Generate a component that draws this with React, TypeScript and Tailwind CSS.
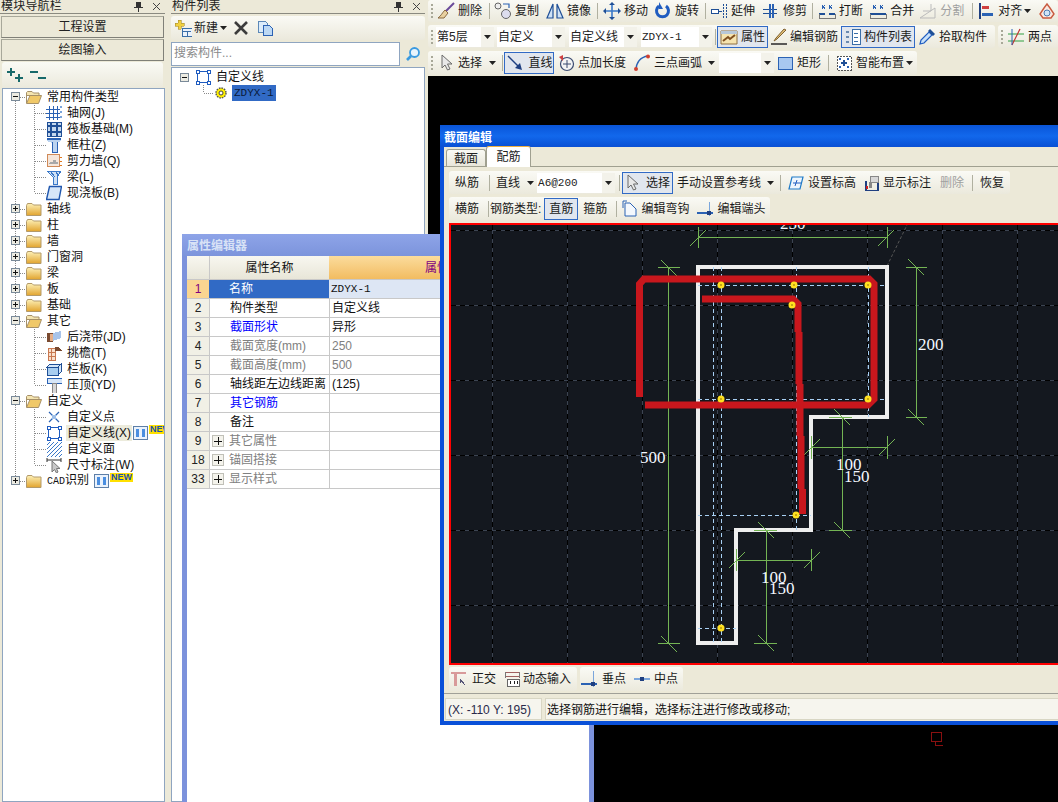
import type { ReactNode } from "react";

// small helpers for the icons
function Ico({ children, w = 16, h = 16, className = "" }: { children: ReactNode; w?: number; h?: number; className?: string }) {
  return (
    <svg width={w} height={h} viewBox={`0 0 ${w} ${h}`} className={`shrink-0 ${className}`} fill="none" shapeRendering="crispEdges">
      {children}
    </svg>
  );
}

const FolderClosed = () => (
  <svg width="16" height="14" viewBox="0 0 16 14" className="shrink-0">
    <defs>
      <linearGradient id="fc" x1="0" y1="0" x2="0" y2="1">
        <stop offset="0" stopColor="#fdf1b8" />
        <stop offset="1" stopColor="#e2a42e" />
      </linearGradient>
    </defs>
    <path d="M.5 3.5 L1.5 1.5 H6 L7.5 3 H15 V13.5 H.5Z" fill="url(#fc)" stroke="#b39a6a" />
  </svg>
);

const FolderOpen = () => (
  <svg width="16" height="14" viewBox="0 0 16 14" className="shrink-0">
    <path d="M.5 13 V2.5 L1.5 1.5 H6 L7.5 3 H13 V5.5 H.5" fill="#f4e4b0" stroke="#a69068" />
    <path d="M.5 13.5 L4 5.5 H15.5 L12.5 13.5Z" fill="#f0c868" stroke="#a69068" />
  </svg>
);

const Icons: Record<string, ReactNode> = {
  axis: (
    <Ico>
      <path d="M3 1V15M7 1V15M11 1V15M0 4H14M0 8H14M0 12H14" stroke="#2b62b4" />
      <path d="M14 1h2v2h-2zM14 6h2v2h-2zM14 11h2v2h-2z" fill="#7ba6dc" />
    </Ico>
  ),
  raft: (
    <Ico>
      <rect x="1" y="1" width="14" height="14" fill="#c5d8ee" stroke="#1f4f96" />
      <path d="M5 1V15M11 1V15M1 5H15M1 11H15" stroke="#1f4f96" strokeWidth="2" />
    </Ico>
  ),
  column: (
    <Ico>
      <path d="M1 1H15V4L11 6V15H6V6L1 4Z" fill="#bcd4f0" />
      <path d="M1 1H15V3H1Z" fill="#2b62b4" />
      <path d="M6 5V15H11V5" stroke="#2b62b4" />
    </Ico>
  ),
  wall: (
    <Ico>
      <rect x="1" y="1.5" width="12" height="12" fill="#f5e6da" stroke="#d08a58" />
      <path d="M3 11h9v-2h-2V7H7v2H4z" fill="#a8a8a8" />
      <path d="M14 4h2M14 8h2M14 12h2" stroke="#e07a20" />
    </Ico>
  ),
  beam: (
    <Ico>
      <path d="M1 2H15L11 8V15H7V8Z" fill="#cfe2f6" stroke="#3a78c8" />
      <path d="M4 2L9 8M9 2L13 7" stroke="#3a78c8" />
    </Ico>
  ),
  slab: (
    <svg width="16" height="16" viewBox="0 0 16 16" className="shrink-0">
      <path d="M3.5 1.5H15.5L13 14.5H.5Z" fill="#d6e6f8" stroke="#2057ae" strokeWidth="1.4" />
    </svg>
  ),
  post: (
    <Ico>
      <rect x="1" y="4" width="6" height="9" fill="#7a4a30" />
      <path d="M4 5h3v7H4z" fill="#e8b088" />
      <path d="M7 4L15 2V9L7 12Z" fill="#a8c4ea" />
    </Ico>
  ),
  eave: (
    <Ico>
      <rect x="2" y="3" width="7" height="12" fill="#fae0cc" stroke="#c87850" />
      <path d="M2 7H9M2 11H9M5 3V15" stroke="#c87850" />
      <path d="M9 2H13L16 6H9Z" fill="#7a4a30" />
    </Ico>
  ),
  rail: (
    <Ico>
      <path d="M1 6H12V14H1Z" fill="#a8cdf0" stroke="#1f4f96" />
      <path d="M1 6L4 3H15L12 6ZM12 6V14L15 11V3Z" fill="#d6e6f8" stroke="#1f4f96" />
    </Ico>
  ),
  cap: (
    <Ico>
      <rect x="1" y="1" width="15" height="5" fill="#d6e6f8" stroke="#2b62b4" />
      <path d="M6 6H10V16H6Z" fill="#d8d8d8" stroke="#888" />
    </Ico>
  ),
  xpoint: (
    <svg width="16" height="16" viewBox="0 0 16 16" className="shrink-0">
      <path d="M3 3L13 13M13 3L3 13" stroke="#2b62b4" strokeWidth="1.2" />
      <path d="M6 6L10 10M10 6L6 10" stroke="#9cc0ec" strokeWidth="1.2" />
    </svg>
  ),
  cline: (
    <Ico>
      <rect x="2.5" y="2.5" width="11" height="11" stroke="#1f5cc0" />
      <path d="M1 1h3v3H1zM12 1h3v3h-3zM1 12h3v3H1zM12 12h3v3h-3z" fill="#fff" stroke="#1f5cc0" />
    </Ico>
  ),
  cface: (
    <svg width="16" height="16" viewBox="0 0 16 16" className="shrink-0">
      <path d="M1 4L4 1M1 8L8 1M1 12L12 1M1 16L16 1M5 16L16 5M9 16L16 9M13 16L16 13" stroke="#3a78c8" />
    </svg>
  ),
  dim: (
    <svg width="16" height="16" viewBox="0 0 16 16" className="shrink-0">
      <path d="M1 1V5M15 1V5M1 3H15" stroke="#333" />
      <path d="M6 4V15L8.5 12.5L10.5 16L12 15L10.5 11.5H14Z" fill="#c8c8c8" stroke="#777" />
    </svg>
  ),
  badge: (
    <Ico w={15} h={14}>
      <rect x=".5" y=".5" width="14" height="13" fill="#eaf2fc" stroke="#5d7fa8" />
      <path d="M3 3h3v8H3zM9 3h3v8H9z" fill="#4a8ee0" />
    </Ico>
  ),
  plusplus: (
    <Ico w={17} h={15}>
      <path d="M3 0h2v3h3v2H5v3H3V5H0V3h3zM11 6h2v3h3v2h-3v3h-2v-3H8V9h3z" fill="#17696a" />
    </Ico>
  ),
  minusminus: (
    <Ico w={17} h={15}>
      <path d="M0 3h8v2H0zM8 9h8v2H8z" fill="#17696a" />
    </Ico>
  ),
  newItem: (
    <Ico w={17} h={18}>
      <path d="M3 1h3v3h3v3H6v3H3V7H0V4h3z" fill="#f0d040" stroke="#a89030" strokeWidth=".6" />
      <rect x="7" y="9" width="10" height="8" fill="#eaf2fc" stroke="#3a6ea8" />
      <path d="M8 12H16M12 12V17" stroke="#3a6ea8" />
    </Ico>
  ),
  del: (
    <svg width="16" height="16" viewBox="0 0 16 16" className="shrink-0">
      <path d="M2 2L14 14M14 2L2 14" stroke="#3c3c3c" strokeWidth="2.6" />
    </svg>
  ),
  copy: (
    <Ico>
      <path d="M1 1H8L10 3V12H1Z" fill="#dcecfa" stroke="#5c88b8" />
      <path d="M6 5H12L15 8V15H6Z" fill="#bcd8f4" stroke="#2b62b4" />
    </Ico>
  ),
  search: (
    <svg width="16" height="16" viewBox="0 0 16 16" className="shrink-0">
      <circle cx="9.5" cy="6.5" r="4.5" fill="#e8f4fc" stroke="#3a9ae0" strokeWidth="1.8" />
      <path d="M6 10L2 14" stroke="#3a9ae0" strokeWidth="2.6" />
    </svg>
  ),
  gear: (
    <svg width="12" height="12" viewBox="0 0 12 12" className="shrink-0">
      <circle cx="6" cy="6" r="5" fill="#fff000" stroke="#555" strokeDasharray="1.6 1" strokeWidth="1.4" />
      <circle cx="6" cy="6" r="2" fill="#fff" stroke="#444" />
    </svg>
  ),
  erase: (
    <svg width="18" height="18" viewBox="0 0 18 18" className="shrink-0">
      <path d="M17 1L9 9" stroke="#6a4a9a" strokeWidth="2" />
      <path d="M8 8L11 11L7 16H1C4 14 5 11 8 8Z" fill="#e8d0a0" stroke="#8a6a40" />
    </svg>
  ),
  dup: (
    <svg width="18" height="18" viewBox="0 0 18 18" className="shrink-0" fill="none">
      <circle cx="4" cy="4" r="3" stroke="#666" fill="#eee" />
      <circle cx="12" cy="12" r="4.5" stroke="#666" fill="#dde" />
      <path d="M9 2H15V6" stroke="#2b62b4" strokeWidth="1.2" />
    </svg>
  ),
  mirror: (
    <svg width="18" height="18" viewBox="0 0 18 18" className="shrink-0">
      <path d="M7 2L1 16H7ZM11 2L17 16H11Z" fill="#cfe2f6" stroke="#1f4f96" strokeWidth="1.2" />
    </svg>
  ),
  move: (
    <svg width="18" height="18" viewBox="0 0 18 18" className="shrink-0">
      <path d="M9 2V16M2 9H16" stroke="#3a78c8" strokeWidth="1.6" />
      <path d="M9 0L12 3H6ZM9 18L6 15H12ZM0 9L3 6V12ZM18 9L15 12V6Z" fill="#1f4f96" />
    </svg>
  ),
  rotate: (
    <svg width="18" height="18" viewBox="0 0 18 18" className="shrink-0">
      <path d="M12 4A6 6 0 1 1 5 4" stroke="#1f5cc0" strokeWidth="3" fill="none" />
      <path d="M5 0V7H9Z" fill="#1f5cc0" />
    </svg>
  ),
  extend: (
    <Ico w={18} h={18}>
      <path d="M1 7H8V11H1Z" fill="#fff" stroke="#1f4f96" />
      <path d="M8 9H12" stroke="#1f4f96" />
      <path d="M13 2V16M16 2V16" stroke="#1f4f96" strokeDasharray="2 1" />
    </Ico>
  ),
  trim: (
    <Ico w={18} h={18}>
      <path d="M1 7H15M1 11H15" stroke="#1f4f96" />
      <path d="M8 2V16M11 2V16" stroke="#2b62b4" strokeWidth="1.4" />
    </Ico>
  ),
  brk: (
    <Ico w={18} h={18}>
      <path d="M1 12H7M11 12H17" stroke="#1f4f96" strokeWidth="2" />
      <path d="M1 12V16H17V12" stroke="#777" />
      <path d="M4 3L7 7M4 7L7 3M11 3L14 7M11 7L14 3" stroke="#2b62b4" />
    </Ico>
  ),
  merge: (
    <Ico w={18} h={18}>
      <path d="M1 12H17" stroke="#1f4f96" strokeWidth="2" />
      <path d="M1 12V16H17V12" stroke="#777" />
      <path d="M4 3L7 7M4 7L7 3M11 3L14 7M11 7L14 3" stroke="#2b62b4" />
    </Ico>
  ),
  split: (
    <svg width="18" height="18" viewBox="0 0 18 18" className="shrink-0">
      <path d="M1 16L16 6V16ZM4 9H12V2" stroke="#bbb" fill="none" />
    </svg>
  ),
  align: (
    <Ico w={18} h={18}>
      <path d="M3 1V17" stroke="#1f3f80" strokeWidth="2" />
      <path d="M5 4H12V7H5Z" fill="#d04040" />
      <path d="M5 11H16V14H5Z" fill="#2b62b4" />
    </Ico>
  ),
  cloud: (
    <svg width="18" height="18" viewBox="0 0 18 18" className="shrink-0">
      <path d="M9 2L12 6L16 12L13 16H5L2 12L6 6Z" fill="#fbe8e0" stroke="#c85a40" strokeWidth="1.4" />
      <circle cx="9" cy="11" r="3" fill="#d0e4f8" stroke="#4a7ab0" />
    </svg>
  ),
  prop: (
    <svg width="18" height="18" viewBox="0 0 18 18" className="shrink-0" fill="none">
      <path d="M1 3H17V16H1Z" fill="#f6e4b0" stroke="#907040" />
      <path d="M1 3H17V6H1Z" fill="#b8c8d8" />
      <path d="M3 13L8 9L10 11L15 7" stroke="#805020" strokeWidth="2" />
    </svg>
  ),
  pencil: (
    <svg width="18" height="18" viewBox="0 0 18 18" className="shrink-0">
      <path d="M16 2L7 11L4 13L6 10L14 1Z" fill="#e0c078" stroke="#806030" />
      <path d="M1 16H17" stroke="#333" strokeWidth="1.6" />
    </svg>
  ),
  list: (
    <Ico w={18} h={18}>
      <path d="M2 3h3v2H2zM2 8h3v2H2zM2 13h3v2H2z" fill="#6a8ab0" />
      <rect x="8" y="1.5" width="8" height="15" fill="#fff" stroke="#3a6ea8" />
      <path d="M10 5H14M10 9H14M10 13H14" stroke="#3a6ea8" />
    </Ico>
  ),
  pick: (
    <svg width="18" height="18" viewBox="0 0 18 18" className="shrink-0">
      <path d="M2 16L3 12L11 4L14 7L6 15Z" fill="#c8e0f8" stroke="#1f5cc0" strokeWidth="1.2" />
      <path d="M10 3L12 1L17 6L15 8Z" fill="#1f4f96" />
    </svg>
  ),
  twoPoints: (
    <svg width="18" height="18" viewBox="0 0 18 18" className="shrink-0">
      <path d="M1 6H17M1 13H17" stroke="#30a040" />
      <path d="M13 1L5 17" stroke="#c03030" strokeWidth="1.2" />
      <path d="M5 1V17" stroke="#2b62b4" />
    </svg>
  ),
  cursor: (
    <svg width="16" height="18" viewBox="0 0 16 18" className="shrink-0">
      <path d="M3 1V14L6 11L8.5 16L11 15L8.5 10H13Z" fill="#e8e8e8" stroke="#6a6a6a" />
    </svg>
  ),
  lineTool: (
    <svg width="18" height="18" viewBox="0 0 18 18" className="shrink-0">
      <path d="M2 2L14 14" stroke="#1f3f80" strokeWidth="1.4" />
      <path d="M16 16L9 14L14 9Z" fill="#1f3f80" />
    </svg>
  ),
  ptLen: (
    <svg width="18" height="18" viewBox="0 0 18 18" className="shrink-0">
      <circle cx="9" cy="10" r="6.5" stroke="#3a4a70" strokeWidth="1.2" fill="#f4f4f4" />
      <path d="M9 6V14M5 10H13" stroke="#3a4a70" />
      <path d="M1 3L5 1L5 7Z" fill="#d04040" />
    </svg>
  ),
  arc3: (
    <svg width="18" height="18" viewBox="0 0 18 18" className="shrink-0" fill="none">
      <path d="M3 16C3 9 7 3 15 2" stroke="#2b62b4" strokeWidth="1.3" />
      <circle cx="3" cy="15" r="2" fill="#d04030" />
      <circle cx="15" cy="2.5" r="2" fill="#d04030" />
    </svg>
  ),
  rect: (
    <svg width="15" height="13" viewBox="0 0 15 13" className="shrink-0">
      <rect x=".5" y=".5" width="14" height="12" fill="#a8c8f0" stroke="#2b62b4" />
    </svg>
  ),
  smart: (
    <Ico w={16} h={16}>
      <rect x="1" y="1" width="14" height="14" fill="#fff" stroke="#555" strokeDasharray="2 1" />
      <path d="M5 8H11M8 5V11" stroke="#1f4f96" strokeWidth="2" />
      <path d="M3 3h2v2H3zM11 3h2v2h-2zM3 11h2v2H3zM11 11h2v2h-2z" fill="#2b62b4" />
    </Ico>
  ),
  level: (
    <svg width="16" height="16" viewBox="0 0 16 16" className="shrink-0">
      <path d="M4 2H15L12 14H1Z" fill="#eef6fd" stroke="#1f7ac8" strokeWidth="1.2" />
      <path d="M5 8H13M9 5L7 11" stroke="#1f5cc0" />
    </svg>
  ),
  showDim: (
    <Ico>
      <path d="M1 6H3V16H1ZM13 6H15V16H13Z" fill="#1f3f80" />
      <path d="M1 15H15" stroke="#1f3f80" />
      <rect x="6" y="1" width="8" height="6" fill="#d8d8d8" stroke="#888" />
      <path d="M6 7V13" stroke="#888" strokeWidth="3" />
      <rect x="2" y="11" width="2" height="3" fill="#d02020" />
    </Ico>
  ),
  hook: (
    <svg width="15" height="17" viewBox="0 0 15 17" className="shrink-0" fill="none">
      <path d="M3 3H8L14 9V16H3Z" fill="#f4f8fd" stroke="#2b62b4" />
      <path d="M1 8V1H5" stroke="#2b62b4" />
    </svg>
  ),
  end: (
    <Ico w={17} h={16}>
      <path d="M0 12H16" stroke="#2b62b4" strokeWidth="2" />
      <path d="M12 1V15" stroke="#7ba6dc" />
      <rect x="10" y="10" width="4" height="4" fill="#1f3f80" />
    </Ico>
  ),
  ortho: (
    <Ico w={16} h={16}>
      <path d="M0 1H15V3H0Z" fill="#d89a9a" />
      <path d="M3 1H6V15H3Z" fill="#d89a9a" />
      <path d="M9 8L14 14M9 8V12" stroke="#557" />
    </Ico>
  ),
  dyn: (
    <Ico w={16} h={16}>
      <path d="M1 1H15M1 5H15" stroke="#a06060" />
      <path d="M1 1V7M15 1V7" stroke="#777" />
      <rect x="3" y="8" width="12" height="7" fill="#fff" stroke="#666" />
      <path d="M6 10V13M10 10V13M13 10V13" stroke="#222" />
    </Ico>
  ),
  perp: (
    <Ico w={16} h={16}>
      <path d="M0 13H16" stroke="#2b62b4" strokeWidth="2" />
      <path d="M12 0V16" stroke="#7ba6dc" />
      <rect x="10" y="11" width="4" height="4" fill="#1f3f80" />
    </Ico>
  ),
  mid: (
    <Ico w={16} h={16}>
      <path d="M0 8H16" stroke="#7ba6dc" strokeWidth="2" />
      <rect x="6" y="6" width="4" height="4" fill="#1f3f80" />
    </Ico>
  ),
  pin: (
    <Ico w={9} h={10}>
      <path d="M2 0H7V5H9V6H5V10H4V6H0V5H2Z" fill="#333" />
    </Ico>
  ),
  close: (
    <svg width="9" height="9" viewBox="0 0 9 9" className="shrink-0">
      <path d="M1 1L8 8M8 1L1 8" stroke="#444" />
    </svg>
  ),
};

function PanelTitle({ title }: { title: string }) {
  return (
    <div className="flex h-[14px] items-center border-b border-[#8a8a80] pl-px leading-[13px]">
      <span className="text-[#222] tracking-[0.2px]">{title}</span>
      <span className="ml-auto flex items-center gap-[9px] pr-[4px]">
        {Icons.pin}
        {Icons.close}
      </span>
    </div>
  );
}

function NavButton({ label }: { label: string }) {
  return (
    <div className="mx-px mt-px flex h-[22px] items-center justify-center border border-[#a8a89a] border-r-[#808078] border-b-[#808078] bg-[#ece9d8] text-[#222]">
      {label}
    </div>
  );
}

function Expander({ open }: { open: boolean }) {
  return (
    <span className="flex h-[9px] w-[9px] shrink-0 items-center justify-center border border-[#7a8a99] bg-[#ecebe2]">
      <svg width="7" height="7" viewBox="0 0 7 7" shapeRendering="crispEdges">
        <path d={open ? "M1 3.5H6" : "M1 3.5H6M3.5 1V6"} stroke="#111" />
      </svg>
    </span>
  );
}

function Guide({ type }: { type: "root" | "rootFirst" | "rootLast" | "child" | "childLast" }) {
  const top = type === "rootFirst" ? "M12.5 8V16" : type === "rootLast" ? "M12.5 0V8" : "M12.5 0V16";
  const kid = type === "child" ? "M31.5 0V16M31.5 8.5H43" : type === "childLast" ? "M31.5 0V8M31.5 8.5H43" : "";
  const w = type === "child" || type === "childLast" ? 43 : 23;
  const rootH = type === "root" || type === "rootFirst" || type === "rootLast" ? "M12.5 8.5H23" : "";
  return (
    <svg width={w} height="16" viewBox={`0 0 ${w} 16`} className="shrink-0" fill="none" shapeRendering="crispEdges">
      <path d={`${top}${rootH}${kid}`} stroke="#8a8a8a" strokeDasharray="1 1" />
    </svg>
  );
}

function NewBadge() {
  return <span className="ml-px h-[9px] -translate-y-[4px] bg-[#ffe000] px-px text-[9px] font-bold leading-[9px] text-[#1a50b0]">NEW</span>;
}

function RootRow({ open, label, first, last, extra }: { open?: boolean; label: ReactNode; first?: boolean; last?: boolean; extra?: ReactNode }) {
  return (
    <div className="relative flex h-4 items-center whitespace-nowrap">
      <Guide type={first ? "rootFirst" : last ? "rootLast" : "root"} />
      {/* expander sits on the guide line */}
      <span className="absolute left-[8px] top-[3px]">
        <Expander open={!!open} />
      </span>
      {open ? <FolderOpen /> : <FolderClosed />}
      <span className="ml-[5px] text-[#111]">{label}</span>
      {extra}
    </div>
  );
}

function ChildRow({ icon, label, last, selected, extra }: { icon: string; label: string; last?: boolean; selected?: boolean; extra?: ReactNode }) {
  return (
    <div className="flex h-4 items-center whitespace-nowrap">
      <Guide type={last ? "childLast" : "child"} />
      {Icons[icon]}
      <span className={`ml-[4px] pl-[1px] pr-px text-[#111] ${selected ? "bg-[#ecebdc]" : ""}`}>{label}</span>
      {extra}
    </div>
  );
}

function Arrow({ className = "" }: { className?: string }) {
  return (
    <svg width="7" height="4" viewBox="0 0 7 4" className={`shrink-0 ${className}`}>
      <path d="M0 0H7L3.5 4Z" fill="#222" />
    </svg>
  );
}

function Grip() {
  return (
    <svg width="3" height="16" viewBox="0 0 3 16" className="shrink-0" shapeRendering="crispEdges">
      <path d="M1 1V15" stroke="#a8a898" strokeDasharray="2 2" strokeWidth="2" />
    </svg>
  );
}

function Sep({ className = "" }: { className?: string }) {
  return <span className={`h-[16px] w-px shrink-0 bg-[#b0b0a0] ${className}`} />;
}

function Tool({ icon, label, className = "", gray, box, gap = "gap-[3px]" }: { icon?: string; label: string; className?: string; gray?: boolean; box?: boolean; gap?: string }) {
  return (
    <span
      className={`flex shrink-0 items-center whitespace-nowrap ${gap} ${gray ? "text-[#a0a0a0]" : "text-[#1a1a1a]"} ${
        box ? "h-[22px] justify-center border border-[#316ac5] bg-[#e1e6ee]" : ""
      } ${className}`}
    >
      {icon ? Icons[icon] : null}
      {label}
    </span>
  );
}

function Combo({ text, className = "", mono }: { text: string; className?: string; mono?: boolean }) {
  return (
    <span className={`flex h-[20px] shrink-0 items-center bg-white pl-[1px] ${className}`}>
      <span className={mono ? "font-['Liberation_Mono',monospace] text-[11px] text-[#222]" : "text-[#222]"}>{text}</span>
      <span className="ml-auto flex h-full w-[13px] items-center justify-center bg-[#f3f2ea]">
        <Arrow />
      </span>
    </span>
  );
}

function Bar({ children, className = "" }: { children: ReactNode; className?: string }) {
  return <div className={`flex items-center rounded-[3px] bg-linear-to-b from-[#fafaf5] to-[#ebe9dc] ${className}`}>{children}</div>;
}

type PropRow = { n: string; name: string; value?: string; tone?: "blue" | "gray"; plus?: boolean };

const propRows: PropRow[] = [
  { n: "2", name: "构件类型", value: "自定义线" },
  { n: "3", name: "截面形状", value: "异形", tone: "blue" },
  { n: "4", name: "截面宽度(mm)", value: "250", tone: "gray" },
  { n: "5", name: "截面高度(mm)", value: "500", tone: "gray" },
  { n: "6", name: "轴线距左边线距离", value: "(125)" },
  { n: "7", name: "其它钢筋", tone: "blue" },
  { n: "8", name: "备注" },
  { n: "9", name: "其它属性", tone: "gray", plus: true },
  { n: "18", name: "锚固搭接", tone: "gray", plus: true },
  { n: "33", name: "显示样式", tone: "gray", plus: true },
];

function PropertyWindow() {
  return (
    <div className="absolute left-[182px] top-[234px] flex h-[600px] w-[412px] flex-col border-x-[5px] border-[#7c92dc] bg-white">
      <div className="-mx-[5px] flex h-[22px] shrink-0 items-center bg-linear-to-b from-[#8ea4e8] to-[#7c94dc] pl-[5px] pt-[2px] font-bold text-[#d8e2f6]">属性编辑器</div>
      <div className="grid h-[24px] shrink-0 grid-cols-[22px_120px_1fr] border-b border-[#c8c8c8]">
        <span className="bg-linear-to-b from-[#f8f7f0] to-[#e8e6d8]" />
        <span className="flex items-center justify-center border-l border-[#c8c8c8] bg-linear-to-b from-[#f8f7f0] to-[#e8e6d8] text-[#111]">属性名称</span>
        <span className="flex items-center bg-linear-to-b from-[#fbdc9c] to-[#f2bc60] pl-[96px] text-[#800080]">属性值</span>
      </div>
      <div className="grid h-[19px] shrink-0 grid-cols-[22px_120px_1fr] border-b border-[#c8c8c8]">
        <span className="flex items-center justify-center bg-[#fad591] text-[#800080]">1</span>
        <span className="flex items-center bg-[#316ac5] pl-[20px] text-white">名称</span>
        <span className="flex items-center bg-[#dde6f4] pl-[2px] font-['Liberation_Mono',monospace] text-[11px] text-[#111]">ZDYX-1</span>
      </div>
      {propRows.map((r) => {
        const color = r.tone === "blue" ? "text-[#0000ff]" : r.tone === "gray" ? "text-[#808080]" : "text-[#111]";
        return (
          <div key={r.n} className="grid h-[19px] shrink-0 grid-cols-[22px_120px_1fr] border-b border-[#c8c8c8]">
            <span className="flex items-center justify-center bg-[#f1f0e6] text-[#222]">{r.n}</span>
            <span className={`flex items-center whitespace-nowrap border-l border-[#c8c8c8] ${r.plus ? "pl-[2px]" : "pl-[20px]"} ${color}`}>
              {r.plus ? (
                <span className="mr-[5px] flex h-[12px] w-[12px] items-center justify-center border border-[#c0c0b8] bg-[#f4f3ec] text-[#222]">
                  <svg width="8" height="8" viewBox="0 0 8 8" shapeRendering="crispEdges">
                    <path d="M0 4H8M4 0V8" stroke="#111" />
                  </svg>
                </span>
              ) : null}
              {r.name}
            </span>
            <span className={`flex items-center border-l border-[#c8c8c8] pl-[2px] ${r.tone === "gray" ? "text-[#808080]" : "text-[#111]"}`}>{r.value}</span>
          </div>
        );
      })}
    </div>
  );
}

// dimension strokes of the section drawing, in page coordinates
const greens = [
  "M698 238H887M698 228V249M887 228V249M690 247L706 231M878 247L894 231",
  "M668 268V644M658 268H680M658 644H680M661 261L677 277M661 637L677 653",
  "M916 268V418M906 268H927M906 418H927M908 260L924 276M908 410L924 426",
  "M811 448H887M811 437V460M887 437V460M804 456L820 440M879 456L895 440",
  "M842 418V531M829 418H852M829 531H852M834 410L850 426M834 523L850 539",
  "M736 561H811M736 550V572M811 550V572M729 569L745 553M804 569L820 553",
  "M766 531V644M754 531H777M754 644H777M758 523L774 539M758 636L774 652",
];

const dots = [
  [721, 286],
  [794, 286],
  [868, 286],
  [792, 306],
  [721, 400],
  [868, 400],
  [796, 516],
  [721, 629],
];

const labels: [string, number, number][] = [
  ["250", 780, 230],
  ["500", 640, 464],
  ["200", 918, 351],
  ["100", 836, 471],
  ["150", 844, 483],
  ["100", 761, 584],
  ["150", 769, 595],
];

function SectionDrawing() {
  const vs = [492, 567, 642, 717, 792, 867, 942, 1017];
  const hs = [231, 306, 381, 456, 531, 606];
  return (
    <svg width="640" height="438" viewBox="451 226 640 438" className="block">
      <g shapeRendering="crispEdges">
        {vs.map((x) => (
          <g key={x}>
            <path d={`M${x}.5 226V664`} stroke="#3c4452" />
            <path d={`M${x}.5 226V664`} stroke="#000" strokeDasharray="5 4" />
          </g>
        ))}
        {hs.map((y) => (
          <g key={y}>
            <path d={`M451 ${y}.5H1091`} stroke="#3c4452" />
            <path d={`M451 ${y}.5H1091`} stroke="#000" strokeDasharray="5 4" />
          </g>
        ))}
      </g>
      <path d="M887 267L907 226" stroke="#555" strokeDasharray="3 2" />
      <path d="M698 268H887V418H811V531H736V644H698Z" fill="none" stroke="#eeeeee" strokeWidth="4" />
      <g shapeRendering="crispEdges">
        <path d="M698 286.5H887M698 400.5H887M698 516.5H811M698 629.5H736M713.5 268V644M721.5 268V644M796.5 268V531M868.5 268V418" stroke="#a8d0f4" strokeDasharray="4 3" />
      </g>
      <path d={greens.join("")} stroke="#74b454" fill="none" shapeRendering="crispEdges" />
      <path d="M639.5 398V285L644 280H869L874 285V400L868 406H645" fill="none" stroke="#c8171d" strokeWidth="7" />
      <path d="M702 300H793L798 305V333" fill="none" stroke="#c8171d" strokeWidth="7" />
      <path d="M799 333V385M800 385V437M801 437V490M802.5 490V515" fill="none" stroke="#c8171d" strokeWidth="7" />
      {dots.map(([x, y]) => (
        <g key={`${x}-${y}`}>
          <circle cx={x} cy={y} r="3.5" fill="#ffe020" />
          <circle cx={x} cy={y} r=".8" fill="#806000" />
        </g>
      ))}
      {labels.map(([t, x, y]) => (
        <text key={`${t}${x}`} x={x} y={y} fill="#f4f8ff" fontSize="17" fontFamily="'Liberation Serif', serif">
          {t}
        </text>
      ))}
    </svg>
  );
}

function SectionWindow() {
  return (
    <div className="absolute left-[440px] top-[125px] flex h-[600px] w-[640px] flex-col border-x-4 border-b-4 border-[#0a50d8] bg-[#ece9d8]">
      <div className="-mx-1 flex h-[22px] shrink-0 items-center bg-linear-to-b from-[#0a55d8] via-[#1268ec] to-[#0a50d4] pl-[4px] pt-[3px] font-bold text-white">截面编辑</div>
      <div className="flex h-[20px] shrink-0 items-end border-b border-[#a0a090] pl-[2px]">
        <span className="flex h-[17px] w-[40px] items-center justify-center rounded-t-[3px] border border-b-0 border-[#a0a090] bg-linear-to-b from-[#fafaf5] to-[#e8e6da] pt-px text-[#222]">截面</span>
        <span className="-mb-px flex h-[21px] w-[45px] items-center justify-center rounded-t-[3px] border border-b-0 border-[#a0a090] border-t-[#f0b040] bg-white text-[#222]">配筋</span>
      </div>
      <Bar className="ml-[5px] mt-[4px] h-[23px] w-[561px]">
        <Tool label="纵筋" className="ml-[6px]" />
        <Sep className="ml-[10px]" />
        <Tool label="直线" className="ml-[6px]" />
        <Arrow className="ml-[7px]" />
        <Combo text="A6@200" mono className="ml-[3px] w-[78px]" />
        <Sep className="ml-[4px]" />
        <Tool icon="cursor" label="选择" box gap="gap-[5px]" className="ml-[2px] w-[51px]" />
        <Tool label="手动设置参考线" className="ml-[4px]" />
        <Arrow className="ml-[6px]" />
        <Sep className="ml-[6px]" />
        <Tool icon="level" label="设置标高" gap="gap-[4px]" className="ml-[7px]" />
        <Tool icon="showDim" label="显示标注" gap="gap-[3px]" className="ml-[8px]" />
        <Tool label="删除" gray className="ml-[9px]" />
        <Sep className="ml-[8px]" />
        <Tool label="恢复" className="ml-[7px]" />
      </Bar>
      <Bar className="ml-[5px] mt-[3px] h-[23px] w-[321px]">
        <Tool label="横筋" className="ml-[6px]" />
        <Sep className="ml-[9px]" />
        <Tool label="钢筋类型:" className="ml-[1px]" />
        <Tool label="直筋" box className="ml-[3px] w-[34px]" />
        <Tool label="箍筋" className="ml-[5px]" />
        <Sep className="ml-[9px]" />
        <Tool icon="hook" label="编辑弯钩" gap="gap-[4px]" className="ml-[5px]" />
        <Tool icon="end" label="编辑端头" gap="gap-[3px]" className="ml-[8px]" />
      </Bar>
      <div className="ml-[5px] mt-[3px] h-[442px] shrink-0 overflow-hidden border-2 border-[#ff0000] bg-[#14181f]">
        <SectionDrawing />
      </div>
      <div className="ml-[5px] flex h-[27px] shrink-0 items-center gap-[3px] pt-px">
        <Bar className="h-[24px] w-[128px] pl-[2px]">
          <Tool icon="ortho" label="正交" gap="gap-[5px]" />
          <Tool icon="dyn" label="动态输入" gap="gap-[3px]" className="ml-[8px]" />
        </Bar>
        <Bar className="h-[24px] w-[103px] pl-[1px]">
          <Tool icon="perp" label="垂点" gap="gap-[5px]" />
          <Tool icon="mid" label="中点" gap="gap-[4px]" className="ml-[8px]" />
        </Bar>
      </div>
      <div className="mt-px h-px shrink-0 bg-[#a0a098]" />
      <div className="mt-[4px] flex h-[22px] shrink-0 gap-[3px]">
        <span className="ml-px flex w-[97px] items-center border border-[#d8d6c4] bg-[#f6f5ee] pl-[2px] pt-px text-[#2a2a4a]">(X: -110 Y: 195)</span>
        <span className="flex flex-1 items-center border border-[#d8d6c4] bg-[#f6f5ee] pl-px pt-px text-[#111]">选择钢筋进行编辑，选择标注进行修改或移动;</span>
      </div>
    </div>
  );
}

export default function App() {
  return (
    <div className="relative flex h-[802px] w-[1058px] overflow-hidden bg-[#ece9d8] font-['Liberation_Sans','Noto_Sans_CJK_SC',sans-serif] text-[12px] leading-4">
      {/* Module navigation */}
      <div className="flex w-[165px] shrink-0 flex-col">
        <PanelTitle title="模块导航栏" />
        <div className="h-px" />
        <NavButton label="工程设置" />
        <NavButton label="绘图输入" />
        <Bar className="mx-[2px] mt-px h-[26px] gap-[6px] pl-[5px] pt-px">
          {Icons.plusplus}
          {Icons.minusminus}
        </Bar>
        <div className="ml-[2px] flex-1 overflow-hidden border border-[#8fa5c0] bg-white">
          <RootRow open first label="常用构件类型" />
          <ChildRow icon="axis" label="轴网(J)" />
          <ChildRow icon="raft" label="筏板基础(M)" />
          <ChildRow icon="column" label="框柱(Z)" />
          <ChildRow icon="wall" label="剪力墙(Q)" />
          <ChildRow icon="beam" label="梁(L)" />
          <ChildRow icon="slab" label="现浇板(B)" last />
          <RootRow label="轴线" />
          <RootRow label="柱" />
          <RootRow label="墙" />
          <RootRow label="门窗洞" />
          <RootRow label="梁" />
          <RootRow label="板" />
          <RootRow label="基础" />
          <RootRow open label="其它" />
          <ChildRow icon="post" label="后浇带(JD)" />
          <ChildRow icon="eave" label="挑檐(T)" />
          <ChildRow icon="rail" label="栏板(K)" />
          <ChildRow icon="cap" label="压顶(YD)" last />
          <RootRow open label="自定义" />
          <ChildRow icon="xpoint" label="自定义点" />
          <ChildRow
            icon="cline"
            label="自定义线(X)"
            selected
            extra={
              <>
                <span className="ml-px">{Icons.badge}</span>
                <NewBadge />
              </>
            }
          />
          <ChildRow icon="cface" label="自定义面" />
          <ChildRow icon="dim" label="尺寸标注(W)" last />
          <RootRow
            last
            label={
              <>
                <span className="font-['Liberation_Mono',monospace] text-[10px]">CAD</span>识别
              </>
            }
            extra={
              <>
                <span className="ml-[5px]">{Icons.badge}</span>
                <NewBadge />
              </>
            }
          />
        </div>
      </div>

      {/* Component list */}
      <div className="ml-[6px] flex w-[254px] shrink-0 flex-col">
        <PanelTitle title="构件列表" />
        <Bar className="mt-[2px] h-[24px] pl-[4px]">
          {Icons.newItem}
          <span className="ml-[2px] text-[#222]">新建</span>
          <Arrow className="ml-[2px]" />
          <span className="ml-[6px]">{Icons.del}</span>
          <span className="ml-[8px]">{Icons.copy}</span>
        </Bar>
        <div className="mb-px mt-[2px] flex h-[24px] items-center">
          <span className="flex h-full flex-1 items-center border border-[#8fa5c0] bg-white pb-[2px] pl-[2px] text-[#8a8a8a]">搜索构件...</span>
          <span className="flex w-[25px] justify-center">{Icons.search}</span>
        </div>
        <div className="flex-1 border border-[#8fa5c0] bg-white pt-[1px]">
          <div className="flex h-4 items-center pl-[8px]">
            <Expander open />
            <span className="ml-[6px]">{Icons.cline}</span>
            <span className="ml-[5px] text-[#111]">自定义线</span>
          </div>
          <div className="flex h-4 items-center pl-[31px]">
            <svg width="12" height="16" viewBox="0 0 12 16" className="shrink-0" fill="none" shapeRendering="crispEdges">
              <path d="M.5 0V8M.5 8.5H11" stroke="#8a8a8a" strokeDasharray="1 1" />
            </svg>
            {Icons.gear}
            <span className="ml-[5px] bg-[#316ac5] px-[2px] font-['Liberation_Mono',monospace] text-[11px] text-[#0a1a3a]">ZDYX-1</span>
          </div>
        </div>
      </div>

      {/* Main toolbars and black drawing area */}
      <div className="ml-[3px] flex min-w-0 flex-1 flex-col">
        <Bar className="h-[22px] pl-[3px]">
          <Grip />
          <Tool icon="erase" label="删除" className="ml-[3px]" />
          <Sep className="ml-[7px]" />
          <Tool icon="dup" label="复制" className="ml-[4px]" />
          <Tool icon="mirror" label="镜像" className="ml-[7px]" />
          <Sep className="ml-[6px]" />
          <Tool icon="move" label="移动" className="ml-[5px]" />
          <Tool icon="rotate" label="旋转" className="ml-[6px]" />
          <Sep className="ml-[6px]" />
          <Tool icon="extend" label="延伸" className="ml-[4px]" />
          <Tool icon="trim" label="修剪" className="ml-[7px]" />
          <Sep className="ml-[5px]" />
          <Tool icon="brk" label="打断" className="ml-[5px]" />
          <Tool icon="merge" label="合并" className="ml-[6px]" />
          <Tool icon="split" label="分割" gray className="ml-[5px]" />
          <Sep className="ml-[8px]" />
          <Tool icon="align" label="对齐" className="ml-[4px]" />
          <Arrow className="ml-[2px]" />
          <span className="ml-[7px]">{Icons.cloud}</span>
        </Bar>
        <div className="mt-[3px] flex h-[23px] gap-[3px]">
          <Bar className="w-[567px] pl-[3px]">
            <Grip />
            <Combo text="第5层" className="ml-[2px] w-[58px]" />
            <Combo text="自定义" className="ml-[3px] w-[68px]" />
            <Combo text="自定义线" className="ml-[4px] w-[68px]" />
            <Combo text="ZDYX-1" mono className="ml-[4px] w-[71px]" />
            <Sep className="ml-[3px]" />
            <Tool icon="prop" label="属性" box className="ml-[1px] w-[51px]" />
            <Tool icon="pencil" label="编辑钢筋" gap="gap-[2px]" className="ml-[2px]" />
            <Tool icon="list" label="构件列表" box gap="gap-[2px]" className="ml-[3px] w-[74px]" />
            <Tool icon="pick" label="拾取构件" gap="gap-[3px]" className="ml-[3px]" />
          </Bar>
          <Bar className="flex-1 pl-[3px]">
            <Grip />
            <Tool icon="twoPoints" label="两点" gap="gap-[3px]" className="ml-[3px]" />
          </Bar>
        </div>
        <Bar className="mt-[3px] h-[24px] w-[489px] pl-[3px]">
          <Grip />
          <Tool icon="cursor" label="选择" gap="gap-[3px]" className="ml-[5px]" />
          <Arrow className="ml-[7px]" />
          <Sep className="ml-[6px]" />
          <Tool icon="lineTool" label="直线" box gap="gap-[5px]" className="ml-[1px] w-[50px]" />
          <Tool icon="ptLen" label="点加长度" gap="gap-[2px]" className="ml-[4px]" />
          <Tool icon="arc3" label="三点画弧" gap="gap-[3px]" className="ml-[7px]" />
          <Arrow className="ml-[6px]" />
          <Combo text="" className="ml-[4px] w-[55px]" />
          <Tool icon="rect" label="矩形" gap="gap-[4px]" className="ml-[4px]" />
          <Sep className="ml-[7px]" />
          <Tool icon="smart" label="智能布置" gap="gap-[4px]" className="ml-[7px]" />
          <Arrow className="ml-[2px]" />
        </Bar>
        <div className="mt-px flex-1 bg-black" />
      </div>

      <PropertyWindow />
      <SectionWindow />

      {/* stray cursor mark on the black area */}
      <svg width="13" height="14" viewBox="0 0 13 14" className="absolute left-[931px] top-[732px]" fill="none" shapeRendering="crispEdges">
        <path d="M.5 .5H10.5V9.5H.5ZM4 9.5V13H12" stroke="#8a1010" />
      </svg>
    </div>
  );
}
